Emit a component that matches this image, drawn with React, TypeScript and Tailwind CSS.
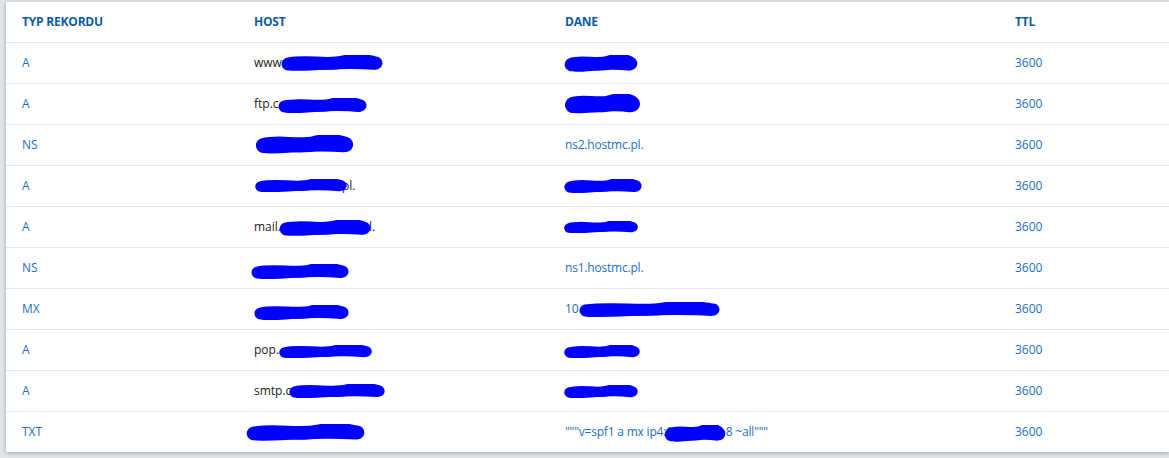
import React from "react";

type B = { x: number; y: number; w: number; h: number };

function Blob({ x, y, w, h }: B) {
  const r = h / 2;
  const sw = h * 0.8;
  const d = `M ${r} ${r + 1} C ${w * 0.25} ${r - 3}, ${w * 0.45} ${r + 3}, ${w * 0.6} ${r - 1} S ${w * 0.85} ${r - 2}, ${w - r} ${r}`;
  const d2 = `M ${r + 3} ${r + 2} C ${w * 0.3} ${r + 3}, ${w * 0.55} ${r - 2}, ${w - r - 2} ${r + 1}`;
  return (
    <svg
      className="absolute pointer-events-none"
      style={{ left: x, top: `calc(50% + ${y - h / 2}px)`, width: w, height: h }}
      viewBox={`0 0 ${w} ${h}`}
    >
      <path d={d} stroke="#0000ff" strokeWidth={sw} strokeLinecap="round" fill="none" />
      <path d={d2} stroke="#0000ff" strokeWidth={sw * 0.9} strokeLinecap="round" fill="none" />
    </svg>
  );
}

type Cell = { pre: string; gap: number; post?: string; blob?: B };

type Row = { type: string; host: Cell; dane: Cell };

const rows: Row[] = [
  { type: "A", host: { pre: "www", gap: 96, post: "", blob: { x: 26, y: 0, w: 104, h: 16 } }, dane: { pre: "", gap: 72, blob: { x: -2, y: 0, w: 76, h: 17 } } },
  { type: "A", host: { pre: "ftp.c", gap: 86, blob: { x: 23, y: 1, w: 91, h: 15 } }, dane: { pre: "", gap: 74, blob: { x: -2, y: 0, w: 79, h: 20 } } },
  { type: "NS", host: { pre: "", gap: 98, blob: { x: 0, y: -1, w: 101, h: 19 } }, dane: { pre: "ns2.hostmc.pl.", gap: 0 } },
  { type: "A", host: { pre: "", gap: 88, post: "pl.", blob: { x: 0, y: -1, w: 94, h: 13 } }, dane: { pre: "", gap: 76, blob: { x: -2, y: 0, w: 80, h: 14 } } },
  { type: "A", host: { pre: "mail.", gap: 88, post: "l.", blob: { x: 24, y: 1, w: 94, h: 16 } }, dane: { pre: "", gap: 72, blob: { x: -2, y: 0, w: 76, h: 12 } } },
  { type: "NS", host: { pre: "", gap: 94, blob: { x: -4, y: 3, w: 100, h: 15 } }, dane: { pre: "ns1.hostmc.pl.", gap: 0 } },
  { type: "MX", host: { pre: "", gap: 94, blob: { x: -1, y: 3, w: 97, h: 15 } }, dane: { pre: "10", gap: 140, blob: { x: 13, y: 0, w: 143, h: 15 } } },
  { type: "A", host: { pre: "pop.", gap: 92, blob: { x: 24, y: 1, w: 95, h: 13 } }, dane: { pre: "", gap: 74, blob: { x: -2, y: 1, w: 78, h: 13 } } },
  { type: "A", host: { pre: "smtp.c", gap: 90, blob: { x: 34, y: 0, w: 98, h: 14 } }, dane: { pre: "", gap: 72, blob: { x: -2, y: 0, w: 76, h: 13 } } },
  { type: "TXT", host: { pre: "", gap: 112, blob: { x: -9, y: 0, w: 121, h: 17 } }, dane: { pre: "\"\"\"v=spf1 a mx ip4:9", gap: 53, post: "8 ~all\"\"\"", blob: { x: 98, y: 1, w: 64, h: 17 } } },
];

function CellView({ c }: { c: Cell }) {
  return (
    <div className="relative flex w-fit h-[18px] items-center whitespace-pre">
      <span>{c.pre}</span>
      {c.gap > 0 && <span className="block h-[12px] shrink-0" style={{ width: c.gap }} />}
      {c.post && <span>{c.post}</span>}
      {c.blob && <Blob {...c.blob} />}
    </div>
  );
}

export default function App() {
  return (
    <div className="min-h-[458px] bg-[#e1e4e8] pt-[2px] pl-[6px] pb-[6px]" style={{ fontFamily: "'Open Sans', 'Noto Sans', sans-serif" }}>
      <div className="bg-white shadow-[0_1px_4px_rgba(0,0,0,0.28)] text-[12px]">
        <div className="grid grid-cols-[232px_311px_450px_1fr] h-[40px] items-center font-bold text-[#0c5ca5] tracking-[-0.2px]">
          <div className="pl-[16px]">TYP REKORDU</div>
          <div className="pl-[16px]">HOST</div>
          <div className="pl-[16px]">DANE</div>
          <div className="pl-[16px]">TTL</div>
        </div>
        {rows.map((r, i) => (
          <div key={i} className="grid grid-cols-[232px_311px_450px_1fr] h-[41px] items-center border-t border-[#e3e5ea]">
            <div className="pl-[16px] text-[#1b6fbf]">{r.type}</div>
            <div className="pl-[16px] text-[#222]">
              <CellView c={r.host} />
            </div>
            <div className="pl-[16px] text-[#1b6fbf] tracking-[-0.2px]">
              <CellView c={r.dane} />
            </div>
            <div className="pl-[16px] text-[#1b6fbf]">3600</div>
          </div>
        ))}
      </div>
    </div>
  );
}
